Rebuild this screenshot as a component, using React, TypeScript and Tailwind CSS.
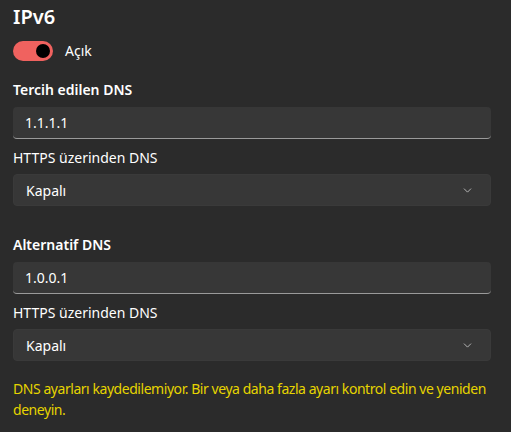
import { ChevronDown } from "lucide-react";

const font = { fontFamily: '"Segoe UI", "Noto Sans", sans-serif' };

const Field = ({ label, value }: { label: string; value: string }) => (
  <div>
    <h3 className="text-[14px] font-semibold text-white leading-5 h-[21px] mb-[6px]">{label}</h3>
    <div className="h-[32px] rounded-[4px] bg-[#373737] border-b border-[#9a9a9a] flex items-center px-3 text-[14px] text-white">
      {value}
    </div>
    <p className="text-[14px] text-white mt-[9px] leading-5">HTTPS üzerinden DNS</p>
    <div className="mt-[6px] h-[32px] rounded-[4px] bg-[#373737] border border-[#3a3a3a] flex items-center justify-between pl-3 pr-4 text-[14px] text-white">
      <span>Kapalı</span>
      <ChevronDown className="w-[13px] h-[13px] text-[#cfcfcf]" strokeWidth={1.5} />
    </div>
  </div>
);

export default function App() {
  return (
    <div
      className="w-[511px] h-[432px] bg-[#2b2b2b] pl-[13px] pr-[20px] pt-[3px] overflow-hidden"
      style={font}
    >
      <h2 className="text-[20px] font-semibold text-white leading-7">IPv6</h2>
      <div className="flex items-center gap-3 mt-[9px]">
        <div className="w-[40px] h-[20px] rounded-full bg-[#f0625f] flex items-center justify-end pr-[3px]">
          <div className="w-[14px] h-[14px] rounded-full bg-black" />
        </div>
        <span className="text-[14px] text-white">Açık</span>
      </div>
      <div className="mt-[19px]">
        <Field label="Tercih edilen DNS" value="1.1.1.1" />
      </div>
      <div className="mt-[29px]">
        <Field label="Alternatif DNS" value="1.0.0.1" />
      </div>
      <p className="mt-[17px] text-[14px] leading-[21px] tracking-[-0.45px] text-[#e6d400]">
        DNS ayarları kaydedilemiyor. Bir veya daha fazla ayarı kontrol edin ve yeniden deneyin.
      </p>
    </div>
  );
}
